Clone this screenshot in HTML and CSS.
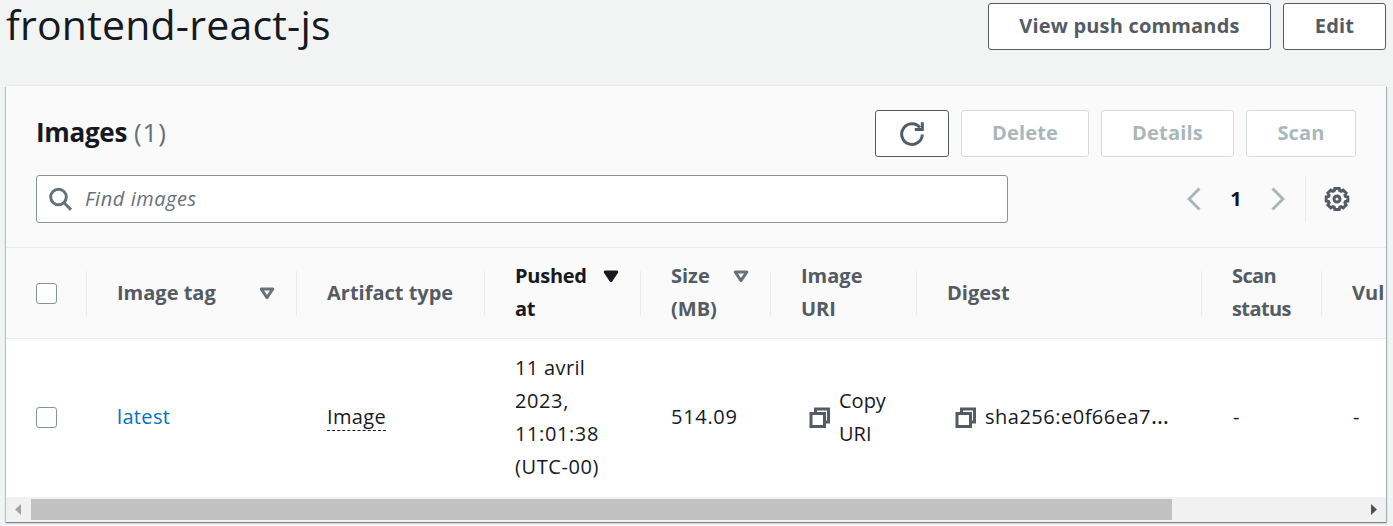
FILE: index.html
```html
<!DOCTYPE html>
<html lang="en">
<head>
<meta charset="utf-8">
<title>frontend-react-js</title>
<link rel="stylesheet" href="styles.css">
</head>
<body>
<svg class="defs" width="0" height="0">
  <symbol id="copy" viewBox="0 0 22 22"><path d="M6.500 5V2h13v13h-3" /><path d="M2 6.500h13.500v13H2z" /></symbol>
  <symbol id="sort" viewBox="0 0 16 13"><path d="M2.200 2h11.600L8 10.600z" /></symbol>
</svg>
<header class="page-header">
  <h1 class="page-title">frontend-react-js</h1>
  <div class="actions">
    <button class="btn push">View push commands</button>
    <button class="btn edit">Edit</button>
  </div>
</header>
<main class="panel">
  <section class="panel-head">
    <div class="title-row">
      <h2 class="panel-title"><span class="name">Images</span><span class="count">(1)</span></h2>
      <div class="actions">
        <button class="btn refresh" aria-label="Refresh"><svg width="26" height="26" viewBox="0 0 26 26"><path d="M23.300 13.500A10.300 10.300 0 1 1 20.900 6.500" /><path d="M23.300 1.200v7.300h-7.500" /></svg></button>
        <button class="btn delete" disabled>Delete</button>
        <button class="btn details" disabled>Details</button>
        <button class="btn scan" disabled>Scan</button>
      </div>
    </div>
    <div class="filter-row">
      <div class="search">
        <svg width="24" height="24" viewBox="0 0 24 24"><circle cx="9.500" cy="10" r="7.800" /><path d="M15 15.700l7 7" /></svg>
        <span>Find images</span>
      </div>
      <div class="pager">
        <svg width="14" height="24" viewBox="0 0 14 24"><path d="M12.500 1.500L2 12l10.500 10.500" /></svg>
        <b>1</b>
        <svg width="14" height="24" viewBox="0 0 14 24"><path d="M1.500 1.500L12 12 1.500 22.500" /></svg>
      </div>
      <div class="settings">
        <svg width="26" height="26" viewBox="0 0 26 26"><path d="M10.800 2.500h4.400l.6 2.300 1.300.6 2.100-1.300 2.900 2.900-1.200 2.100.6 1.400 2.300.5v4l-2.300.6-.6 1.400 1.200 2-2.900 2.900-2.100-1.200-1.300.5-.6 2.300h-4.400l-.6-2.300-1.300-.5-2.100 1.200L3.900 19l1.200-2-.6-1.400-2.300-.6v-4l2.300-.5.6-1.400L3.900 7l2.900-2.900 2.100 1.300 1.300-.6z" /><circle cx="13" cy="13" r="3" /></svg>
      </div>
    </div>
  </section>
  <div class="table-wrap">
    <table>
      <colgroup><col class="c1"><col class="c2"><col class="c3"><col class="c4"><col class="c5"><col class="c6"><col class="c7"><col class="c8"><col class="c9"></colgroup>
      <thead>
        <tr>
          <th><div class="cell"><i class="check"></i></div></th>
          <th><div class="cell"><span>Image tag</span><svg class="sort" width="16" height="13"><use href="#sort" /></svg></div></th>
          <th><div class="cell"><span>Artifact type</span></div></th>
          <th class="sorted"><div class="cell"><span class="tight">Pushed<br>at</span><svg class="sort top" width="16" height="13"><use href="#sort" /></svg></div></th>
          <th><div class="cell"><span>Size<br>(MB)</span><svg class="sort top" width="16" height="13"><use href="#sort" /></svg></div></th>
          <th><div class="cell"><span>Image<br>URI</span></div></th>
          <th><div class="cell"><span>Digest</span></div></th>
          <th><div class="cell"><span class="tighter">Scan<br>status</span></div></th>
          <th><div class="cell"><span>Vul</span></div></th>
        </tr>
      </thead>
      <tbody>
        <tr>
          <td><i class="check"></i></td>
          <td><a class="link">latest</a></td>
          <td><span class="type">Image</span></td>
          <td><span class="date"><span class="day">11 avril</span><br>2023,<br>11:01:38<br>(UTC-00)</span></td>
          <td><span class="size">514.09</span></td>
          <td><div class="copy"><svg width="22" height="22"><use href="#copy" /></svg><span class="copy-uri">Copy<br>URI</span></div></td>
          <td><div class="copy"><svg width="22" height="22"><use href="#copy" /></svg><span class="digest">sha256:e0f66ea7<span class="dots">…</span></span></div></td>
          <td><span class="dash">-</span></td>
          <td><span class="dash">-</span></td>
        </tr>
      </tbody>
    </table>
  </div>
  <div class="scrollbar">
    <svg width="25" height="25" viewBox="0 0 25 25"><path fill="#a3a3a3" d="M15 7v11L9 12.500z" /></svg>
    <div class="thumb"></div>
    <svg width="25" height="25" viewBox="0 0 25 25"><path fill="#505050" d="M10 7v11l6-5.500z" /></svg>
  </div>
</main>
</body>
</html>
```
FILE: styles.css
```css
* { box-sizing: border-box; }
html, body { height: 100%; }
body {
  margin: 0;
  padding: 3px 7px 0 6px;
  overflow: hidden;
  background: #f2f3f3;
  color: #16191f;
  font: 20px/33px "Open Sans", "Noto Sans", sans-serif;
}
svg { display: block; flex: none; fill: none; stroke-width: 3; }
.defs { position: absolute; }
h1, h2 { margin: 0; }
.page-header { display: flex; justify-content: space-between; height: 83px; }
.page-title { font-size: 41px; line-height: 46px; font-weight: 400; letter-spacing: .2px; margin-top: -2px; white-space: nowrap; }
.actions { display: flex; gap: 12px; }
.btn {
  height: 47px;
  padding: 0 0 2px;
  border: 1px solid #545b64;
  border-radius: 3px;
  background: #fff;
  color: #545b64;
  font: 700 20px/33px "Open Sans", "Noto Sans", sans-serif;
  letter-spacing: .18px;
  white-space: nowrap;
}
.btn:disabled { border-color: #d5dbdb; color: #aab7b8; }
.push { width: 283px; }
.edit { width: 103px; }
.refresh { width: 74px; display: grid; place-items: center; padding: 0; stroke: #545b64; }
.delete { width: 128px; }
.details { width: 133px; }
.scan { width: 110px; }
.panel {
  width: 1380px;
  height: 436px;
  background: #fff;
  box-shadow: 0 1px 1px #7b8b99, 1px 1px 1px #aab7b8, -1px 1px 1px #c5cccf, 0 -1px 0 #eaeded;
}
.panel-head { height: 162px; padding: 24px 30px 0; background: #fafafa; border-bottom: 1px solid #eaeded; }
.title-row { display: flex; justify-content: space-between; height: 65px; }
.panel-title { display: flex; gap: 7px; font-size: 26px; line-height: 44px; }
.name { letter-spacing: -.3px; }
.count { font-weight: 400; color: #687078; letter-spacing: .8px; }
.filter-row { display: flex; align-items: center; height: 48px; }
.search {
  display: flex; align-items: center; gap: 12px;
  width: 972px; height: 48px; padding: 0 12px;
  border: 1px solid #879596; border-radius: 3px; background: #fff;
  color: #687078; font-style: italic; letter-spacing: .55px; stroke: #687078;
}
.search span { margin-top: -2px; }
.pager { display: flex; align-items: center; justify-content: space-between; width: 98px; margin-left: 179px; stroke: #aab7b8; }
.pager b { font-size: 20px; margin-top: -2px; }
.settings { display: flex; align-items: center; height: 46px; margin-left: 20px; padding-left: 18px; border-left: 1px solid #eaeded; stroke: #545b64; }
.table-wrap { height: 249px; overflow: hidden; }
table { width: 1560px; table-layout: fixed; border-collapse: separate; border-spacing: 0; }
.c1 { width: 81px; } .c2 { width: 210px; } .c3 { width: 188px; } .c4 { width: 156px; } .c5 { width: 130px; }
.c6 { width: 146px; } .c7 { width: 285px; } .c8 { width: 120px; } .c9 { width: 244px; }
th, td { padding: 0; text-align: left; vertical-align: middle; }
th { height: 91px; background: #fafafa; border-bottom: 1px solid #eaeded; color: #545b64; }
th.sorted { color: #16191f; }
td { height: 157px; padding-left: 30px; letter-spacing: .5px; }
th .cell { display: flex; align-items: center; justify-content: space-between; height: 45px; padding: 0 21px 0 30px; border-right: 1px solid #eaeded; }
th span, td span, .link { display: inline-block; white-space: nowrap; }
th span { margin-top: -2px; }
td span, .link { margin-bottom: 2px; }
.tight { letter-spacing: -.25px; }
.tighter { letter-spacing: -.6px; }
.sort { stroke: #687078; stroke-linejoin: round; }
.sorted .sort { stroke: #16191f; fill: #16191f; }
.sort.top { margin-bottom: 33px; }
.check { display: block; width: 21px; height: 21px; border: 1px solid #879596; border-radius: 3px; background: #fff; }
.link { color: #0073bb; letter-spacing: .35px; }
td .type { line-height: 26px; margin-bottom: 5px; letter-spacing: .35px; border-bottom: 1px dashed #16191f; }
.date { letter-spacing: .6px; }
td .day { margin: 0; letter-spacing: .35px; }
.size { letter-spacing: .7px; }
.copy-uri { letter-spacing: 0; }
td .digest { margin-bottom: 2px; letter-spacing: .5px; }
td .dots { margin: 0; font-size: 23px; line-height: 20px; }
td .dash { padding-left: 1px; }
.copy { display: flex; align-items: center; gap: 8px; padding-left: 8px; stroke: #545b64; }
.scrollbar { display: flex; height: 25px; background: #f1f1f1; stroke: none; }
.thumb { width: 1141px; height: 21px; margin: 2px auto 0 0; background: #c1c1c1; }
```
